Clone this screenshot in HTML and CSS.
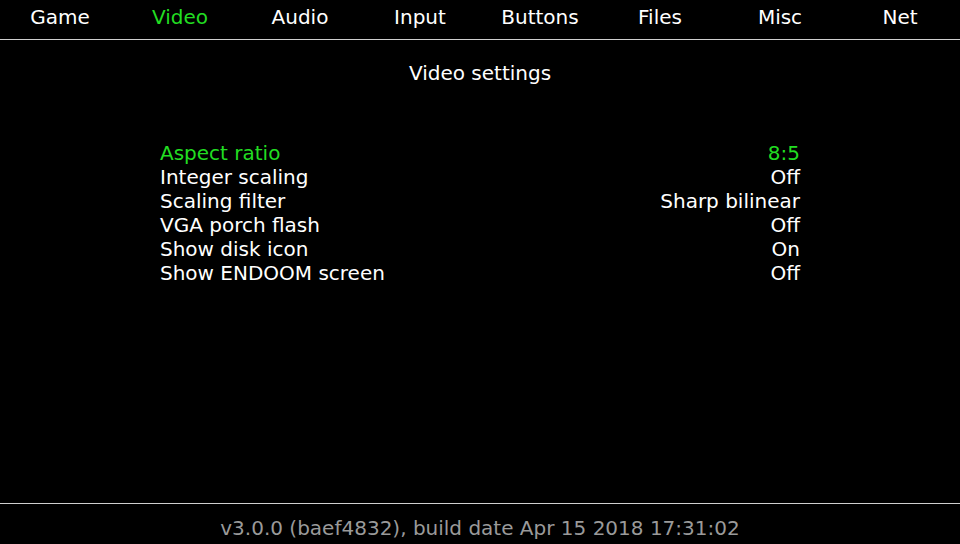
FILE: index.html
```html
<!DOCTYPE html>
<html>
<head>
<meta charset="utf-8">
<link rel="stylesheet" href="styles.css">
</head>
<body>
<div class="screen">
  <nav class="tabs">
    <span class="tab">Game</span>
    <span class="tab active">Video</span>
    <span class="tab">Audio</span>
    <span class="tab">Input</span>
    <span class="tab">Buttons</span>
    <span class="tab">Files</span>
    <span class="tab">Misc</span>
    <span class="tab">Net</span>
  </nav>
  <main class="content">
    <h1 class="title">Video settings</h1>
    <ul class="options">
      <li class="row active"><span>Aspect ratio</span><span>8:5</span></li>
      <li class="row"><span>Integer scaling</span><span>Off</span></li>
      <li class="row"><span>Scaling filter</span><span>Sharp bilinear</span></li>
      <li class="row"><span>VGA porch flash</span><span>Off</span></li>
      <li class="row"><span>Show disk icon</span><span>On</span></li>
      <li class="row"><span>Show ENDOOM screen</span><span>Off</span></li>
    </ul>
  </main>
  <footer class="footer">v3.0.0 (baef4832), build date Apr 15 2018 17:31:02</footer>
</div>
</body>
</html>
```
FILE: styles.css
```css
html, body {
  margin: 0;
  padding: 0;
  background: #000;
}
.screen {
  width: 960px;
  height: 544px;
  display: flex;
  flex-direction: column;
  font-family: "DejaVu Sans", sans-serif;
  font-size: 20px;
  color: #fff;
}
.tabs {
  display: grid;
  grid-template-columns: repeat(8, 120px);
  height: 39px;
  border-bottom: 1px solid #cfcfcf;
}
.tab {
  text-align: center;
  line-height: 35px;
}
.tab.active, .row.active {
  color: #22dd22;
}
.content {
  flex: 1;
  display: flex;
  flex-direction: column;
  align-items: center;
}
.title {
  margin: 21px 0 0;
  font-size: 20px;
  font-weight: normal;
  line-height: 24px;
}
.options {
  list-style: none;
  margin: 56px 0 0;
  padding: 0;
  width: 640px;
}
.row {
  display: flex;
  justify-content: space-between;
  line-height: 24px;
  height: 24px;
}
.footer {
  height: 40px;
  border-top: 1px solid #cfcfcf;
  text-align: center;
  line-height: 48px;
  color: #9a9a9a;
}
```
